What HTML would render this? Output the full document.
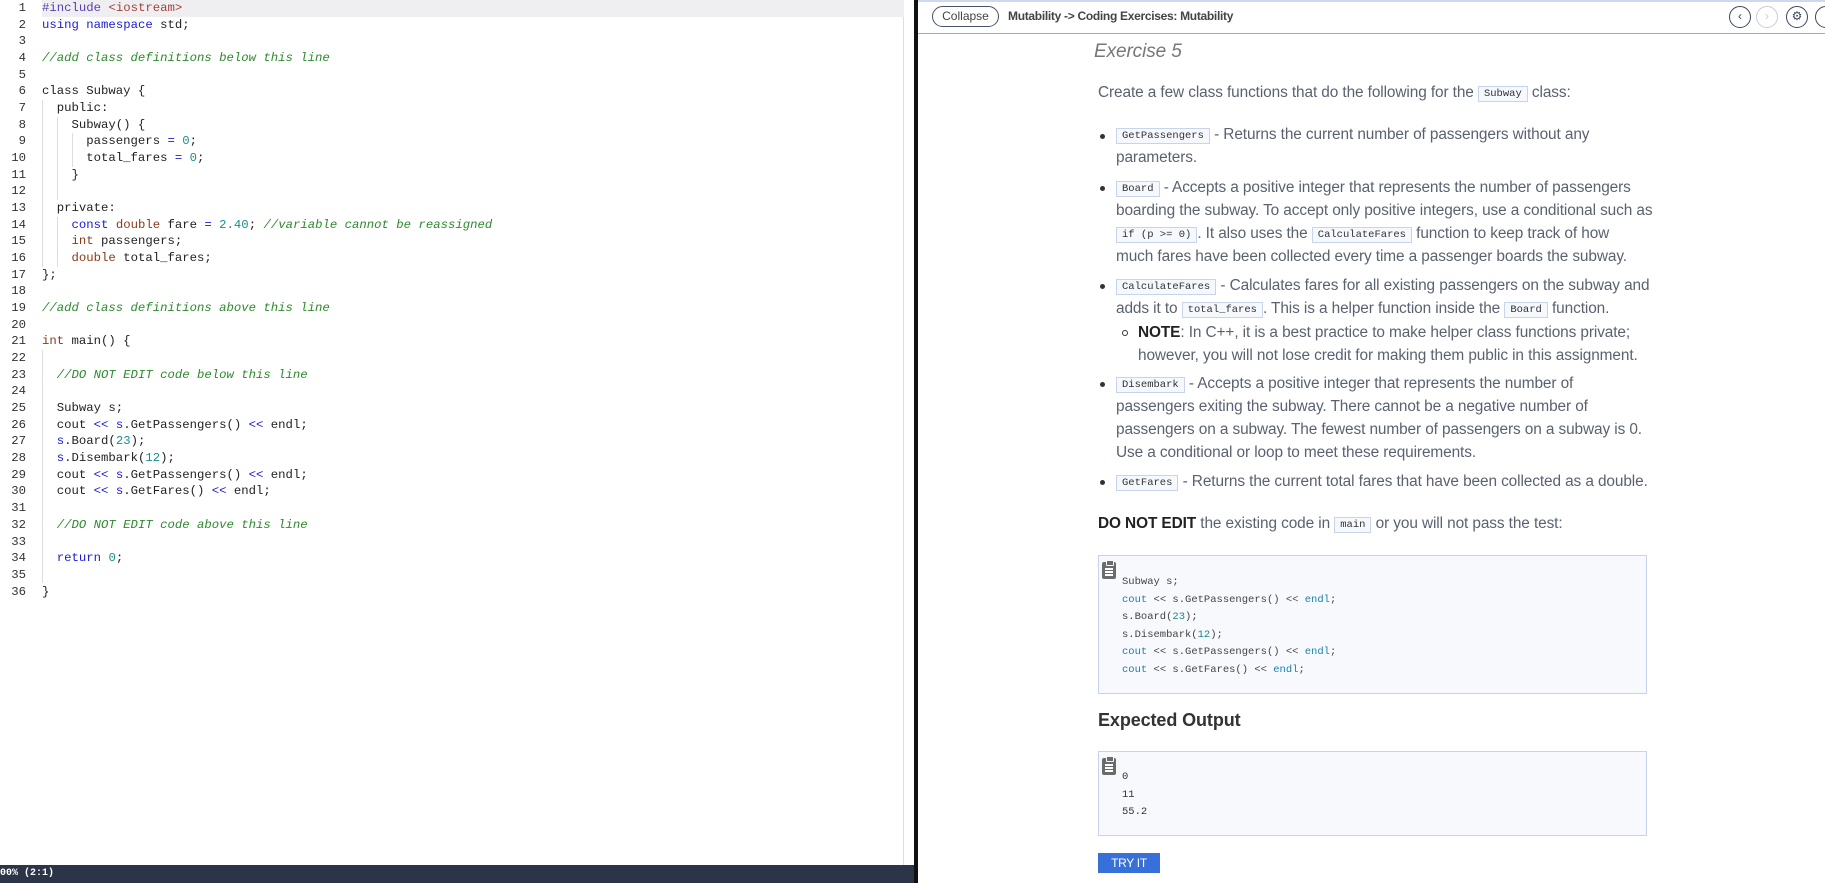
<!DOCTYPE html>
<html><head><meta charset="utf-8">
<style>
*{margin:0;padding:0;box-sizing:border-box}
body{width:1825px;height:883px;overflow:hidden;background:#fff;position:relative;font-family:"Liberation Sans",sans-serif}
.ed{position:absolute;left:0;top:0;width:904px;height:865px;background:#fff;border-right:1px solid #ddd}
.ln{position:absolute;left:0;width:26px;text-align:right;font:12.3px/16.67px "Liberation Mono",monospace;color:#333}
.code{position:absolute;left:42px;top:0;font:12.3px/16.67px "Liberation Mono",monospace;color:#222;white-space:pre}
.hl{position:absolute;left:42px;top:0;width:862px;height:16.67px;background:#efeff1}
.g{position:absolute;width:1px;background:#ddd}
.k{color:#1a1ad6}.t{color:#8a3a1a}.c{color:#2d8a2d;font-style:italic}.n{color:#17908a}.s{color:#a3413a}.p{color:#5a3fb0}
.status{position:absolute;left:0;top:865px;width:914px;height:18px;background:#2c3548;color:#fff;font:bold 10px/18px "Liberation Mono",monospace;padding-left:0;text-indent:-6px}
.div{position:absolute;left:914px;top:0;width:4px;height:883px;background:#111}
.rp{position:absolute;left:918px;top:0;width:907px;height:883px;background:#fff}
.hdr{position:absolute;left:918px;top:0;width:907px;height:34px;border-top:2px solid #cfd9ee;border-bottom:1px solid #a3aab8;background:#fff}
.pill{position:absolute;left:932px;top:6px;width:67px;height:21px;border:1px solid #4a5468;border-radius:11px;font-size:12px;line-height:19px;text-align:center;color:#444}
.title{position:absolute;left:1008px;top:9px;font-size:12px;font-weight:bold;color:#444;letter-spacing:-0.3px}
.ic{position:absolute;top:6px;width:22px;height:22px;border:1.5px solid #3a4560;border-radius:50%;font-size:12px;line-height:19px;text-align:center;color:#3a4560}
.tx{position:absolute;font-size:15.4px;color:#5a6270;white-space:nowrap;line-height:23px;letter-spacing:-0.1px}
.ic2{display:inline-block;font:10.5px/14px "Liberation Mono",monospace;color:#333;background:#f5f8fc;border:1px solid #c7d4ea;padding:0 5px;vertical-align:1px;letter-spacing:0}
.dot{position:absolute;width:5px;height:5px;border-radius:50%;background:#333}
.box{position:absolute;left:1098px;width:549px;background:#f7f9fc;border:1px solid #c6d3ee}
.clip{position:absolute;left:3px;top:6px;width:14px;height:17px;background:#6b6b6b;border-radius:2px}
.clip:before{content:"";position:absolute;left:4px;top:-2px;width:6px;height:4px;background:#6b6b6b;border:1px solid #f7f9fc;border-radius:1px}
.clip i{position:absolute;left:3px;width:8px;height:1.5px;background:#fff}
.bc{position:absolute;left:23px;font:10.5px/17.5px "Liberation Mono",monospace;color:#444;white-space:pre}
.bl{color:#1a7fb0}.bn{color:#138a8a}
</style></head><body>
<div class="ed">
<div class="hl"></div>
<div class="ln" style="top:0">1<br>2<br>3<br>4<br>5<br>6<br>7<br>8<br>9<br>10<br>11<br>12<br>13<br>14<br>15<br>16<br>17<br>18<br>19<br>20<br>21<br>22<br>23<br>24<br>25<br>26<br>27<br>28<br>29<br>30<br>31<br>32<br>33<br>34<br>35<br>36</div>
<div class="g" style="left:42px;top:100px;height:167px"></div>
<div class="g" style="left:57px;top:117px;height:83px"></div>
<div class="g" style="left:72px;top:133px;height:34px"></div>
<div class="g" style="left:57px;top:217px;height:50px"></div>
<div class="g" style="left:42px;top:350px;height:233px"></div>
<div class="code"><span class="p">#include</span> <span class="s">&lt;iostream&gt;</span>
<span class="k">using</span> <span class="k">namespace</span> std;

<span class="c">//add class definitions below this line</span>

class Subway {
  public:
    Subway() {
      passengers <span class="k">=</span> <span class="n">0</span>;
      total_fares <span class="k">=</span> <span class="n">0</span>;
    }

  private:
    <span class="k">const</span> <span class="t">double</span> fare <span class="k">=</span> <span class="n">2.40</span>; <span class="c">//variable cannot be reassigned</span>
    <span class="t">int</span> passengers;
    <span class="t">double</span> total_fares;
};

<span class="c">//add class definitions above this line</span>

<span class="t">int</span> main() {

  <span class="c">//DO NOT EDIT code below this line</span>

  Subway s;
  cout <span class="k">&lt;&lt;</span> <span class="k">s</span>.GetPassengers() <span class="k">&lt;&lt;</span> endl;
  <span class="k">s</span>.Board(<span class="n">23</span>);
  <span class="k">s</span>.Disembark(<span class="n">12</span>);
  cout <span class="k">&lt;&lt;</span> <span class="k">s</span>.GetPassengers() <span class="k">&lt;&lt;</span> endl;
  cout <span class="k">&lt;&lt;</span> <span class="k">s</span>.GetFares() <span class="k">&lt;&lt;</span> endl;

  <span class="c">//DO NOT EDIT code above this line</span>

  <span class="k">return</span> <span class="n">0</span>;

}</div>
</div>
<div class="status">100% (2:1)</div>
<div class="div"></div>
<div class="rp"></div>
<div class="hdr"></div>
<div class="pill">Collapse</div>
<div class="title">Mutability -&gt; Coding Exercises: Mutability</div>
<div class="ic" style="left:1729px">&#8249;</div>
<div class="ic" style="left:1756px;border-color:#c8ccd6;color:#c8ccd6">&#8250;</div>
<div class="ic" style="left:1786px">&#9881;</div>
<div class="ic" style="left:1815px"></div>

<div class="tx" style="left:1094px;top:38px;font-size:19px;font-style:italic;color:#777;line-height:28px">Exercise 5</div>
<div class="tx" style="left:1098px;top:81px">Create a few class functions that do the following for the <span class="ic2">Subway</span> class:</div>

<div class="dot" style="left:1100px;top:134px"></div>
<div class="tx" style="left:1116px;top:123px"><span class="ic2">GetPassengers</span> - Returns the current number of passengers without any<br>parameters.</div>

<div class="dot" style="left:1100px;top:186px"></div>
<div class="tx" style="left:1116px;top:176px"><span class="ic2">Board</span> - Accepts a positive integer that represents the number of passengers<br>boarding the subway. To accept only positive integers, use a conditional such as<br><span class="ic2">if (p &gt;= 0)</span>. It also uses the <span class="ic2">CalculateFares</span> function to keep track of how<br>much fares have been collected every time a passenger boards the subway.</div>

<div class="dot" style="left:1100px;top:284px"></div>
<div class="tx" style="left:1116px;top:274px"><span class="ic2">CalculateFares</span> - Calculates fares for all existing passengers on the subway and<br>adds it to <span class="ic2">total_fares</span>. This is a helper function inside the <span class="ic2">Board</span> function.</div>
<div style="position:absolute;left:1122px;top:330px;width:6px;height:6px;border:1px solid #333;border-radius:50%"></div>
<div class="tx" style="left:1138px;top:321px"><b style="color:#222">NOTE</b>: In C++, it is a best practice to make helper class functions private;<br>however, you will not lose credit for making them public in this assignment.</div>

<div class="dot" style="left:1100px;top:382px"></div>
<div class="tx" style="left:1116px;top:372px"><span class="ic2">Disembark</span> - Accepts a positive integer that represents the number of<br>passengers exiting the subway. There cannot be a negative number of<br>passengers on a subway. The fewest number of passengers on a subway is 0.<br>Use a conditional or loop to meet these requirements.</div>

<div class="dot" style="left:1100px;top:480px"></div>
<div class="tx" style="left:1116px;top:470px"><span class="ic2">GetFares</span> - Returns the current total fares that have been collected as a double.</div>

<div class="tx" style="left:1098px;top:512px"><b style="color:#222">DO NOT EDIT</b> the existing code in <span class="ic2">main</span> or you will not pass the test:</div>

<div class="box" style="top:555px;height:139px">
<div class="clip"><i style="top:6px"></i><i style="top:9px"></i><i style="top:12px"></i></div>
<div class="bc" style="top:18px">Subway s;
<span class="bl">cout</span> &lt;&lt; s.GetPassengers() &lt;&lt; <span class="bl">endl</span>;
s.Board(<span class="bn">23</span>);
s.Disembark(<span class="bn">12</span>);
<span class="bl">cout</span> &lt;&lt; s.GetPassengers() &lt;&lt; <span class="bl">endl</span>;
<span class="bl">cout</span> &lt;&lt; s.GetFares() &lt;&lt; <span class="bl">endl</span>;</div>
</div>

<div class="tx" style="left:1098px;top:708px;font-size:18px;font-weight:bold;color:#333;line-height:24px">Expected Output</div>

<div class="box" style="top:751px;height:85px">
<div class="clip"><i style="top:6px"></i><i style="top:9px"></i><i style="top:12px"></i></div>
<div class="bc" style="top:17px;color:#333">0
11
55.2</div>
</div>

<div style="position:absolute;left:1098px;top:853px;width:62px;height:20px;background:#3670d8;color:#fff;font-size:12px;line-height:20px;text-align:center;letter-spacing:-0.3px">TRY IT</div>
</body></html>
